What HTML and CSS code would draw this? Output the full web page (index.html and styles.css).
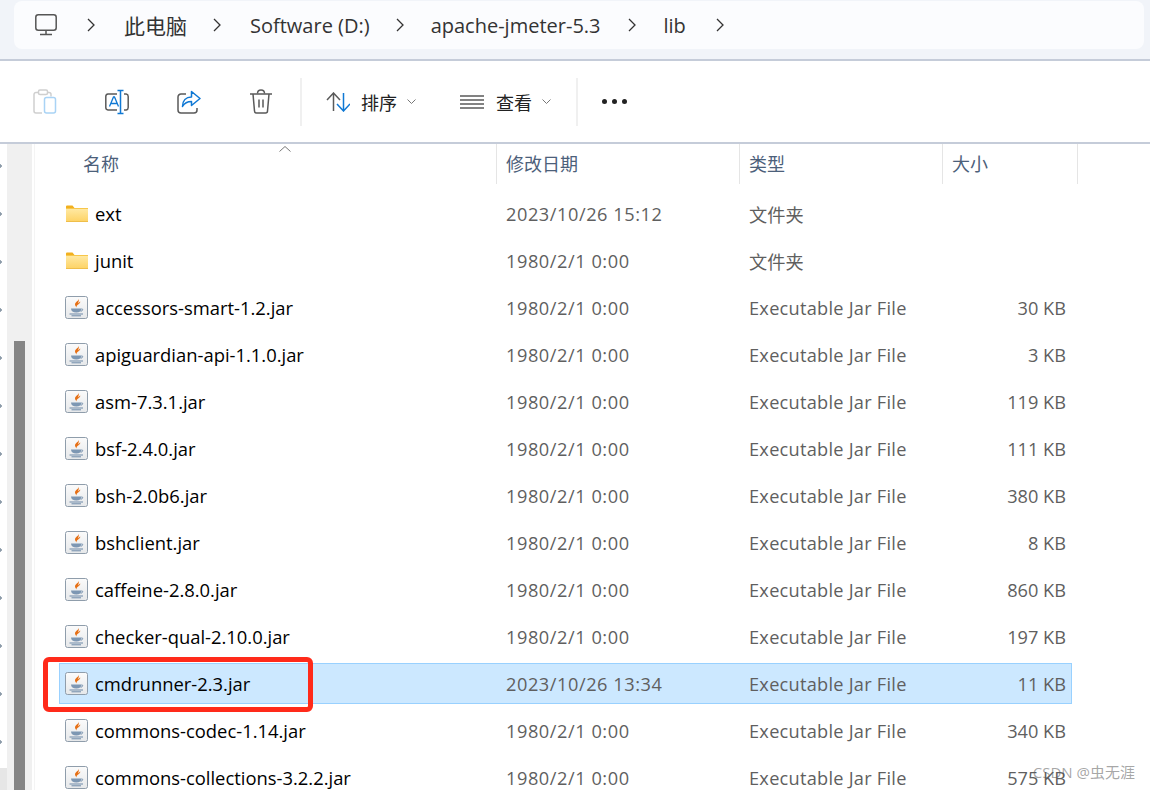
FILE: index.html
```html
<!DOCTYPE html>
<html lang="zh-CN">
<head>
    <meta charset="UTF-8">
    <title>lib</title>
    <link rel="stylesheet" href="styles.css">
</head>
<body>
    <svg class="defs" width="0" height="0">
        <defs>
            <linearGradient id="folderFill" x1="0" y1="0" x2="0" y2="1">
                <stop offset="0" stop-color="#ffeaa6"/>
                <stop offset="1" stop-color="#fdd263"/>
            </linearGradient>
            <linearGradient id="jarFill" x1="0" y1="0" x2="0" y2="1">
                <stop offset="0" stop-color="#fbfbfb"/>
                <stop offset="1" stop-color="#e6e8ea"/>
            </linearGradient>
        </defs>
        <symbol id="folder" viewBox="0 0 22 17">
            <path d="M0 1.500a1 1 0 0 1 1-1h5.500l2 2.500H0z" fill="#f2b01e"/>
            <rect x="0" y="3" width="22" height="14" fill="url(#folderFill)"/>
            <path d="M0 3h22v1H0z" fill="#f7c64a"/>
            <path d="M0 16.300h22V17H0z" fill="#e8b53f"/>
        </symbol>
        <symbol id="jar" viewBox="0 0 23 23">
            <rect x=".5" y=".5" width="22" height="22" rx="2" fill="url(#jarFill)" stroke="#8f9dab"/>
            <path d="M13.500 2.500c.8 2.200-3.500 3.200-3.500 6 0 1.200 1 2 1.500 3-.1-1.500.4-2.200 2-3.300 1.200-.8 2-1.600 1.600-2.900-.5 1-1.500 1.500-2.300 2.100 1-1.500 1.300-3.300.7-4.900z" fill="#e66f14"/>
            <path d="M6 12.500h10.500c0 2.500-2 4-5.200 4S6 15 6 12.500z" fill="#7d97b3"/>
            <path d="M16.500 13c1.500-.3 2 1.500-.8 2.300" fill="none" stroke="#6d89a8"/>
            <path d="M4.500 18h13.500M6.500 19.800h9.500" stroke="#6d89a8" fill="none"/>
        </symbol>
    </svg>

    <div class="page">
        <div class="address">
            <div class="crumbs">
                <svg class="pc" width="22" height="22" viewBox="0 0 22 22" fill="none" stroke="#555" stroke-width="1.500">
                    <rect x=".8" y=".8" width="20.400" height="15.400" rx="2.500"/>
                    <path d="M11 16.500v3.500M5 20.500h12"/>
                </svg>
                <svg class="chev" width="8" height="14" viewBox="0 0 8 14"><path d="M1 1l6 6-6 6" fill="none" stroke="#333" stroke-width="1.300"/></svg>
                <span class="crumb-cjk">此电脑</span>
                <svg class="chev" width="8" height="14" viewBox="0 0 8 14"><path d="M1 1l6 6-6 6" fill="none" stroke="#333" stroke-width="1.300"/></svg>
                <span class="crumb-drive">Software (D:)</span>
                <svg class="chev" width="8" height="14" viewBox="0 0 8 14"><path d="M1 1l6 6-6 6" fill="none" stroke="#333" stroke-width="1.300"/></svg>
                <span class="crumb-dir">apache-jmeter-5.3</span>
                <svg class="chev" width="8" height="14" viewBox="0 0 8 14"><path d="M1 1l6 6-6 6" fill="none" stroke="#333" stroke-width="1.300"/></svg>
                <span class="crumb-lib">lib</span>
                <svg class="chev" width="8" height="14" viewBox="0 0 8 14"><path d="M1 1l6 6-6 6" fill="none" stroke="#333" stroke-width="1.300"/></svg>
            </div>
        </div>

        <div class="toolbar">
            <svg class="tool tool-paste" width="24" height="26" viewBox="0 0 24 26" fill="none">
                <path d="M5 3.500H3a2 2 0 0 0-2 2V22a2 2 0 0 0 2 2h6" stroke="#cfcfcf" stroke-width="1.500"/>
                <path d="M15 3.500h1a2 2 0 0 1 2 2v2" stroke="#cfcfcf" stroke-width="1.500"/>
                <rect x="5.500" y="1" width="9" height="4.500" rx="1.500" stroke="#cfcfcf" stroke-width="1.500"/>
                <rect x="11.500" y="8.500" width="11" height="15.500" rx="2" stroke="#a9d3f5" stroke-width="1.500"/>
            </svg>
            <svg class="tool tool-rename" width="24" height="26" viewBox="0 0 24 26" fill="none">
                <path d="M12 5H3a2.500 2.500 0 0 0-2.200 2.500v11A2.500 2.500 0 0 0 3 21h9M19 5h2.200a2.500 2.500 0 0 1 2 2.500v11a2.500 2.500 0 0 1-2 2.500H19" stroke="#5a5a5a" stroke-width="1.500"/>
                <path d="M4.500 17.500L8.500 8h1l4 9.500M6 14.500h6" stroke="#0f78d4" stroke-width="1.300"/>
                <path d="M12.500 1.500h6M12.500 24.500h6M15.500 1.500v23" stroke="#0f78d4" stroke-width="1.500"/>
            </svg>
            <svg class="tool tool-share" width="24" height="26" viewBox="0 0 24 26" fill="none">
                <path d="M9 5H4a3 3 0 0 0-3 3v13a3 3 0 0 0 3 3h13a3 3 0 0 0 3-3v-2" stroke="#5a5a5a" stroke-width="1.500"/>
                <path d="M14.500 2.500L23 9.500l-8.500 7v-4c-4 0-7 1.500-9 5 0-6 3.500-9.500 9-9.500z" stroke="#0f78d4" stroke-width="1.500" stroke-linejoin="round"/>
            </svg>
            <svg class="tool tool-delete" width="22" height="25" viewBox="0 0 22 25" fill="none" stroke="#5a5a5a" stroke-width="1.500">
                <path d="M0 5h22M3 5l1.500 17a2 2 0 0 0 2 2h9a2 2 0 0 0 2-2L19 5"/>
                <path d="M7.500 4.500C7.500 2.500 9 1 11 1s3.500 1.500 3.500 3.500"/>
                <path d="M9 10.500v8M13 10.500v8"/>
            </svg>
            <div class="tool-sep"></div>
            <svg class="tool-sort" width="24" height="20" viewBox="0 0 24 20" fill="none" stroke-width="1.500">
                <path d="M1 8l6.500-7L14 8M7.500 1v18" stroke="#5a5a5a"/>
                <path d="M11 12l6.500 7 6.500-7M17.500 19V1" stroke="#0f78d4"/>
            </svg>
            <span class="tool-label label-sort">排序</span>
            <svg class="caret" width="9" height="5" viewBox="0 0 9 5"><path d="M.5.500l4 4 4-4" fill="none" stroke="#777"/></svg>
            <svg class="tool-view" width="24" height="14" viewBox="0 0 24 14" fill="none" stroke="#5a5a5a" stroke-width="1.300">
                <path d="M0 1h24M0 5h24M0 9h24M0 13h24"/>
            </svg>
            <span class="tool-label">查看</span>
            <svg class="caret" width="9" height="5" viewBox="0 0 9 5"><path d="M.5.500l4 4 4-4" fill="none" stroke="#777"/></svg>
            <div class="tool-sep sep-second"></div>
            <div class="dots"><i></i><i></i><i></i></div>
        </div>

        <div class="content">
            <div class="nav-edge"><div class="edge-block"></div></div>
            <div class="nav-track"><div class="nav-thumb"></div></div>
            <div class="list">
                <div class="list-head">
                    <div class="head-cell first">名称</div>
                    <div class="head-cell">修改日期</div>
                    <div class="head-cell">类型</div>
                    <div class="head-cell">大小</div>
                    <svg class="sort-up" width="12" height="6" viewBox="0 0 12 6"><path d="M.5 5.500L6 .5l5.500 5" fill="none" stroke="#777"/></svg>
                </div>

                <div class="rows">
                    <div class="row">
                        <div class="name"><svg class="ico-folder"><use href="#folder"/></svg>ext</div>
                        <div class="cell date">2023/10/26 15:12</div><div class="cell">文件夹</div><div class="size"></div>
                    </div>
                    <div class="row">
                        <div class="name"><svg class="ico-folder"><use href="#folder"/></svg>junit</div>
                        <div class="cell date">1980/2/1 0:00</div><div class="cell">文件夹</div><div class="size"></div>
                    </div>
                    <div class="row">
                        <div class="name"><svg class="ico-jar"><use href="#jar"/></svg>accessors-smart-1.2.jar</div>
                        <div class="cell date">1980/2/1 0:00</div><div class="cell type">Executable Jar File</div><div class="size">30 KB</div>
                    </div>
                    <div class="row">
                        <div class="name"><svg class="ico-jar"><use href="#jar"/></svg>apiguardian-api-1.1.0.jar</div>
                        <div class="cell date">1980/2/1 0:00</div><div class="cell type">Executable Jar File</div><div class="size">3 KB</div>
                    </div>
                    <div class="row">
                        <div class="name"><svg class="ico-jar"><use href="#jar"/></svg>asm-7.3.1.jar</div>
                        <div class="cell date">1980/2/1 0:00</div><div class="cell type">Executable Jar File</div><div class="size">119 KB</div>
                    </div>
                    <div class="row">
                        <div class="name"><svg class="ico-jar"><use href="#jar"/></svg>bsf-2.4.0.jar</div>
                        <div class="cell date">1980/2/1 0:00</div><div class="cell type">Executable Jar File</div><div class="size">111 KB</div>
                    </div>
                    <div class="row">
                        <div class="name"><svg class="ico-jar"><use href="#jar"/></svg>bsh-2.0b6.jar</div>
                        <div class="cell date">1980/2/1 0:00</div><div class="cell type">Executable Jar File</div><div class="size">380 KB</div>
                    </div>
                    <div class="row">
                        <div class="name"><svg class="ico-jar"><use href="#jar"/></svg>bshclient.jar</div>
                        <div class="cell date">1980/2/1 0:00</div><div class="cell type">Executable Jar File</div><div class="size">8 KB</div>
                    </div>
                    <div class="row">
                        <div class="name"><svg class="ico-jar"><use href="#jar"/></svg>caffeine-2.8.0.jar</div>
                        <div class="cell date">1980/2/1 0:00</div><div class="cell type">Executable Jar File</div><div class="size">860 KB</div>
                    </div>
                    <div class="row">
                        <div class="name"><svg class="ico-jar"><use href="#jar"/></svg>checker-qual-2.10.0.jar</div>
                        <div class="cell date">1980/2/1 0:00</div><div class="cell type">Executable Jar File</div><div class="size">197 KB</div>
                    </div>
                    <div class="row selected">
                        <div class="name"><svg class="ico-jar"><use href="#jar"/></svg>cmdrunner-2.3.jar</div>
                        <div class="cell date">2023/10/26 13:34</div><div class="cell type">Executable Jar File</div><div class="size">11 KB</div>
                        <div class="red-box"></div>
                    </div>
                    <div class="row">
                        <div class="name"><svg class="ico-jar"><use href="#jar"/></svg>commons-codec-1.14.jar</div>
                        <div class="cell date">1980/2/1 0:00</div><div class="cell type">Executable Jar File</div><div class="size">340 KB</div>
                    </div>
                    <div class="row">
                        <div class="name"><svg class="ico-jar"><use href="#jar"/></svg>commons-collections-3.2.2.jar</div>
                        <div class="cell date">1980/2/1 0:00</div><div class="cell type">Executable Jar File</div><div class="size">575 KB</div>
                    </div>
                </div>
            </div>
        </div>

        <div class="watermark">CSDN @虫无涯</div>
    </div>
</body>
</html>
```

FILE: styles.css
```css
html, body {
    margin: 0;
    padding: 0;
    height: 100%;
    overflow: hidden;
}

body {
    font-family: "Open Sans", "Noto Sans CJK SC", sans-serif;
    background-color: #fff;
    color: #000;
}

.defs {
    position: absolute;
}

.page {
    position: relative;
    width: 1150px;
    height: 790px;
    overflow: hidden;
}

/* Address bar */
.address {
    height: 59px;
    box-sizing: border-box;
    padding: 1px 6px 10px 14px;
    background-color: #f1f4f9;
}

.crumbs {
    display: flex;
    align-items: center;
    gap: 28px;
    height: 48px;
    padding-left: 21px;
    background-color: #fbfcfe;
    border-radius: 8px;
    font-size: 20px;
    color: #333;
}

.crumbs .pc {
    margin-right: 2px;
}

.crumb-cjk {
    font-size: 21px;
    margin-left: 1px;
    margin-right: -2px;
}

.crumb-drive {
    margin-left: 1px;
    margin-right: -2px;
}

.crumb-dir {
    margin-left: -1px;
    margin-right: -1px;
}

.crumb-lib {
    margin-right: 2px;
}

/* Toolbar */
.toolbar {
    display: flex;
    align-items: center;
    height: 81px;
    padding-left: 33px;
    border-top: 2px solid #c5ccd9;
    border-bottom: 2px solid #c5ccd9;
}

.tool-rename, .tool-share {
    margin-left: 48px;
}

.tool-delete {
    margin-left: 49px;
}

.tool-sep {
    width: 2px;
    height: 48px;
    margin-left: 28px;
    background-color: #f0f0f0;
}

.tool-sort {
    margin-left: 24px;
}

.tool-label {
    margin-left: 12px;
    font-size: 18px;
    color: #222;
}

.label-sort {
    margin-left: 11px;
}

.caret {
    margin-left: 10px;
}

.tool-view {
    margin-left: 44px;
}

.sep-second {
    margin-left: 25px;
}

.dots {
    display: flex;
    gap: 5px;
    margin-left: 24px;
}

.dots i {
    display: block;
    width: 5px;
    height: 5px;
    border-radius: 50%;
    background-color: #222;
}

/* Main area */
.content {
    display: flex;
    height: 646px;
}

.nav-edge {
    display: flex;
    align-items: flex-end;
    width: 7px;
    background-image: radial-gradient(circle, #8b9aa8 1.5px, transparent 2px);
    background-size: 4px 48px;
    background-position: -2px -2px;
    background-repeat: repeat-y;
}

.edge-block {
    width: 7px;
    height: 22px;
    background-color: #e6e6e6;
}

.nav-track {
    display: flex;
    align-items: flex-end;
    width: 25px;
    padding-left: 7px;
    box-sizing: border-box;
    background-color: #f0f0f0;
}

.nav-thumb {
    width: 11px;
    height: 449px;
    background-color: #858585;
}

.list {
    flex: 1;
    padding-left: 24px;
    margin-left: 2px;
    border-left: 1px solid #f4f4f4;
    box-sizing: border-box;
}

.list-head {
    position: relative;
    display: grid;
    grid-template-columns: 438px 243px 203px 135px;
    height: 40px;
    font-size: 18px;
    color: #4c607a;
}

.head-cell {
    box-sizing: border-box;
    padding-left: 9px;
    line-height: 40px;
    border-right: 1px solid #e5e5e5;
}

.head-cell.first {
    padding-left: 24px;
}

.sort-up {
    position: absolute;
    left: 220px;
    top: 2px;
}

.rows {
    display: flex;
    flex-direction: column;
    gap: 6px;
    margin-top: 9px;
}

.row {
    position: relative;
    display: grid;
    grid-template-columns: 437px 243px 203px 130px;
    align-items: center;
    width: 1013px;
    height: 41px;
    flex: none;
    font-size: 18.2px;
    color: #5f5f5f;
}

.row.selected {
    background-color: #cce8ff;
    box-shadow: inset 0 0 0 1px #99d1ff;
}

.name {
    display: flex;
    align-items: center;
    font-size: 18.4px;
    color: #000;
    white-space: nowrap;
}

.ico-jar {
    width: 23px;
    height: 23px;
    margin: 0 7px 0 6px;
}

.ico-folder {
    width: 22px;
    height: 17px;
    margin: 0 7px 0 7px;
}

.cell {
    padding-left: 10px;
    white-space: nowrap;
}

.date {
    letter-spacing: 0.55px;
}

.type {
    letter-spacing: 0.25px;
}

.size {
    padding-right: 6px;
    text-align: right;
    white-space: nowrap;
}

/* Red annotation over the selected file */
.red-box {
    position: absolute;
    left: -16px;
    top: -6px;
    width: 270px;
    height: 55px;
    box-sizing: border-box;
    border: 5px solid #ff2a1a;
    border-radius: 6px;
}

.watermark {
    position: absolute;
    right: 15px;
    bottom: 8px;
    font-size: 15px;
    color: rgba(90, 90, 90, 0.55);
}
```
